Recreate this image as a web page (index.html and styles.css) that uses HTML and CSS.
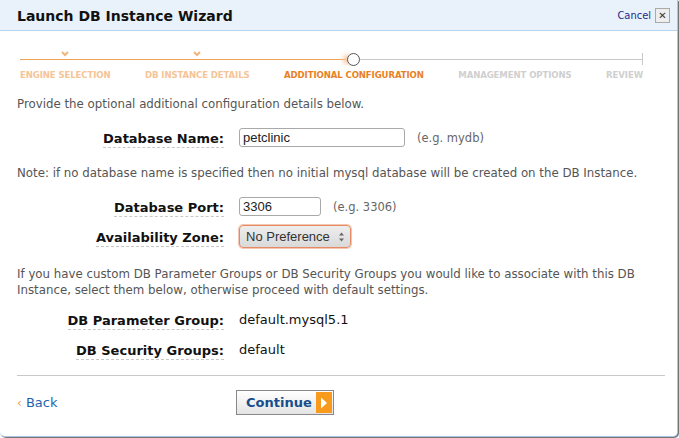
FILE: index.html
```html
<!DOCTYPE html>
<html>
<head>
<meta charset="utf-8">
<link rel="stylesheet" href="styles.css">
</head>
<body>
<div class="dialog">
  <div class="header">
    <h1 class="title">Launch DB Instance Wizard</h1>
    <div class="cancel"><a class="cancel-link">Cancel</a><span class="close-box">✕</span></div>
  </div>
  <div class="content">
    <div class="steps">
      <div class="track">
        <div class="track-done"></div>
        <div class="knob"></div>
        <div class="track-todo"></div>
        <div class="track-end"></div>
        <svg class="check c1" width="8" height="6" viewBox="0 0 8 6"><path d="M1 1 L4 4 L7 1" fill="none" stroke="#f2b67a" stroke-width="2"/></svg>
        <svg class="check c2" width="8" height="6" viewBox="0 0 8 6"><path d="M1 1 L4 4 L7 1" fill="none" stroke="#f2b67a" stroke-width="2"/></svg>
      </div>
      <div class="step-labels">
        <span class="step done">ENGINE SELECTION</span>
        <span class="step done">DB INSTANCE DETAILS</span>
        <span class="step active">ADDITIONAL CONFIGURATION</span>
        <span class="step todo">MANAGEMENT OPTIONS</span>
        <span class="step todo">REVIEW</span>
      </div>
    </div>

    <p class="intro">Provide the optional additional configuration details below.</p>

    <div class="row row-name">
      <div class="label"><span>Database Name:</span></div>
      <div class="field"><input class="input input-name" value="petclinic"><span class="hint">(e.g. mydb)</span></div>
    </div>

    <p class="note">Note: if no database name is specified then no initial mysql database will be created on the DB Instance.</p>

    <div class="row row-port">
      <div class="label"><span>Database Port:</span></div>
      <div class="field"><input class="input input-port" value="3306"><span class="hint">(e.g. 3306)</span></div>
    </div>
    <div class="row row-zone">
      <div class="label"><span>Availability Zone:</span></div>
      <div class="field"><div class="select">No Preference<svg class="updown" width="7" height="10" viewBox="0 0 7 10"><path d="M3.5 0.5 L6 3.5 H1 Z M3.5 9.5 L6 6.5 H1 Z" fill="#666"/></svg></div></div>
    </div>

    <p class="para">If you have custom DB Parameter Groups or DB Security Groups you would like to associate with this DB Instance, select them below, otherwise proceed with default settings.</p>

    <div class="row row-param">
      <div class="label"><span>DB Parameter Group:</span></div>
      <div class="value">default.mysql5.1</div>
    </div>
    <div class="row row-sec">
      <div class="label"><span>DB Security Groups:</span></div>
      <div class="value">default</div>
    </div>

    <div class="rule"></div>

    <div class="footer">
      <a class="back"><span class="back-arrow">‹</span> Back</a>
      <button class="continue">Continue<span class="go"><svg width="8" height="12" viewBox="0 0 8 12"><path d="M1 0.5 L7 6 L1 11.5 Z" fill="#fff"/></svg></span></button>
    </div>
  </div>
</div>
</body>
</html>
```

FILE: styles.css
```css
html, body {
  margin: 0;
  padding: 0;
  background: #ffffff;
}
body {
  width: 679px;
  height: 438px;
  overflow: hidden;
  font-family: "DejaVu Sans", Verdana, sans-serif;
}
.dialog {
  width: 677px;
  height: 436px;
  border-right: 1px solid #a9c7e4;
  border-bottom: 1px solid #a9c7e4;
  border-bottom-right-radius: 5px;
  border-bottom-left-radius: 5px;
  box-shadow: 1px 1px 1px #666;
  background: #fff;
  position: relative;
}
.header {
  height: 30px;
  background: #e9f1fb;
  border-bottom: 1px solid #b8d4ee;
  display: flex;
  align-items: center;
  justify-content: space-between;
  padding: 0 7px 0 17px;
}
.title {
  margin: 0;
  font-size: 14px;
  font-weight: bold;
  color: #111;
  padding-top: 2px;
  letter-spacing: 0;
}
.cancel {
  display: flex;
  align-items: center;
  gap: 4px;
}
.cancel-link {
  font-family: "DejaVu Sans Condensed", "DejaVu Sans", sans-serif;
  font-size: 11px;
  color: #1c2a8c;
}
.close-box {
  width: 13px;
  height: 13px;
  border: 1px solid #aaa;
  background: #eee;
  font-size: 10px;
  line-height: 13px;
  text-align: center;
  color: #333;
  font-family: "DejaVu Sans", sans-serif;
}
.content {
  padding: 0 12px 0 17px;
}
.steps {
  padding-top: 20px;
  padding-right: 22px;
}
.track {
  position: relative;
  height: 16px;
  display: flex;
  align-items: center;
  padding-left: 3px;
}
.track-done {
  width: 328px;
  height: 1px;
  background: #efa45c;
}
.knob {
  width: 13px;
  height: 13px;
  border: 1.5px solid #555;
  border-radius: 50%;
  background: #fff;
  box-sizing: border-box;
  margin: 0 0 0 -1px;
  box-shadow: -6px 0 4px -2px #f7c9a0;
}
.track-todo {
  flex: 1;
  height: 1px;
  background: #c9c9c9;
}
.track-end {
  width: 1px;
  height: 12px;
  background: #c9c9c9;
}
.check {
  position: absolute;
  top: 0;
}
.c1 { left: 44px; }
.c2 { left: 176px; }
.step-labels {
  display: flex;
  justify-content: space-between;
  padding-left: 3px;
  margin-top: 2px;
}
.step {
  font-family: "DejaVu Sans Condensed", "DejaVu Sans", sans-serif;
  font-weight: bold;
  font-size: 9.5px;
  letter-spacing: -0.1px;
}
.step.done { color: #f5c497; }
.step.active { color: #e8811f; }
.step.todo { color: #cfcfcf; }
.intro, .note, .para {
  margin: 0;
  font-size: 11.8px;
  color: #555;
  line-height: 15px;
}
.intro {
  margin-top: 17px;
}
.row {
  display: flex;
  align-items: center;
}
.label {
  width: 207px;
  flex: none;
  text-align: right;
  padding-right: 15px;
}
.label span {
  font-weight: bold;
  font-size: 13px;
  color: #111;
  border-bottom: 1px dashed #c8c8c8;
  padding-bottom: 1px;
}
.field {
  display: flex;
  align-items: center;
}
.input {
  height: 19px;
  box-sizing: border-box;
  border: 1px solid #a9a9a9;
  border-radius: 3px;
  padding: 0 3px;
  font-family: "Liberation Sans", Arial, sans-serif;
  font-size: 13px;
  color: #222;
  margin: 0;
}
.input-name { width: 166px; }
.input-port { width: 82px; }
.hint {
  font-size: 11.5px;
  color: #666;
  margin-left: 12px;
}
.row-name { margin-top: 16px; }
.note { margin-top: 19px; }
.row-port { margin-top: 16px; }
.row-zone { margin-top: 9px; }
.select {
  width: 112px;
  height: 23px;
  box-sizing: border-box;
  border: 1px solid #e58a63;
  border-radius: 4px;
  background: linear-gradient(#eeeeee, #d9d9d9);
  box-shadow: 0 0 0 1px #f5c6b0;
  font-family: "Liberation Sans", Arial, sans-serif;
  font-size: 13px;
  color: #333;
  display: flex;
  align-items: center;
  justify-content: space-between;
  padding: 0 5px 0 6px;
}
.para {
  margin-top: 18px;
  line-height: 16px;
}
.value {
  font-size: 13px;
  color: #111;
}
.row-param { margin-top: 12px; }
.row-sec { margin-top: 11px; }
.rule {
  height: 1px;
  background: #c8c8c8;
  margin-top: 16px;
}
.footer {
  display: flex;
  align-items: center;
  margin-top: 14px;
}
.back {
  font-size: 13px;
  color: #1f63ae;
  width: 219px;
}
.back-arrow {
  color: #f0a050;
  font-size: 12px;
}
.continue {
  width: 98px;
  height: 25px;
  border: 1px solid #888;
  background: linear-gradient(#ffffff, #e4e4e4);
  font-family: "DejaVu Sans", sans-serif;
  font-weight: bold;
  font-size: 13px;
  color: #164e8c;
  display: flex;
  align-items: center;
  justify-content: space-between;
  padding: 0 1px 0 9px;
  margin: 0;
}
.go {
  width: 16px;
  height: 21px;
  background: #f89a1c;
  display: flex;
  align-items: center;
  justify-content: center;
}
```
